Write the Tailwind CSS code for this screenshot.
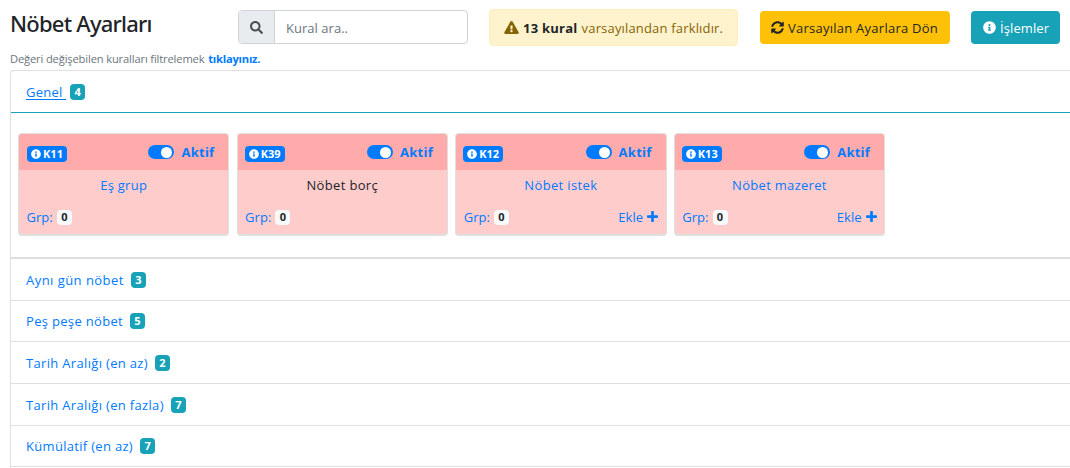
<!DOCTYPE html>
<html lang="tr">
<head>
<meta charset="utf-8">
<title>Nöbet Ayarları</title>
<script src="https://cdn.jsdelivr.net/npm/@tailwindcss/browser@4"></script>
</head>
<body class="h-[468px] overflow-hidden bg-white text-[#212529] text-[13px] leading-5 tracking-[0.25px] font-['Open_Sans','Noto_Sans',sans-serif] whitespace-nowrap">
<svg class="hidden">
  <symbol id="info" viewBox="0 0 512 512"><path fill="currentColor" d="M256 8C119 8 8 119 8 256s111 248 248 248 248-111 248-248S393 8 256 8zm0 110a42 42 0 1 1 0 84 42 42 0 0 1 0-84zm56 254a12 12 0 0 1-12 12h-88a12 12 0 0 1-12-12v-24a12 12 0 0 1 12-12h12v-64h-12a12 12 0 0 1-12-12v-24a12 12 0 0 1 12-12h64a12 12 0 0 1 12 12v100h12a12 12 0 0 1 12 12z"/></symbol>
  <symbol id="plus" viewBox="0 0 448 512"><path fill="currentColor" d="M416 200H280V64a32 32 0 0 0-32-32h-48a32 32 0 0 0-32 32v136H32a32 32 0 0 0-32 32v48a32 32 0 0 0 32 32h136v136a32 32 0 0 0 32 32h48a32 32 0 0 0 32-32V312h136a32 32 0 0 0 32-32v-48a32 32 0 0 0-32-32z"/></symbol>
</svg>

<header class="flex h-[49px] items-start pl-[10px]">
  <h1 class="mt-[8px] w-[228px] text-[22px] leading-[30px] font-medium tracking-[-0.78px] font-['Noto_Sans',sans-serif]">Nöbet Ayarları</h1>
  <div class="mt-[10px] flex h-[34px] w-[230px] overflow-hidden rounded-[4px] border border-[#ced4da]">
    <span class="flex w-[36px] items-center justify-center border-r border-[#ced4da] bg-[#e9ecef] text-[#495057]">
      <svg class="size-[13px]" viewBox="0 0 512 512"><path fill="currentColor" d="M505 442.700 405.300 343c-4.500-4.500-10.600-7-17-7H372c27.600-35.300 44-79.700 44-128C416 93.100 322.900 0 208 0S0 93.100 0 208s93.100 208 208 208c48.300 0 92.700-16.400 128-44v16.300c0 6.400 2.500 12.500 7 17l99.700 99.700c9.400 9.400 24.600 9.400 33.900 0l28.300-28.300c9.400-9.400 9.400-24.600.1-34zM208 336c-70.700 0-128-57.200-128-128 0-70.700 57.200-128 128-128 70.700 0 128 57.200 128 128 0 70.700-57.200 128-128 128z"/></svg>
    </span>
    <input class="w-0 flex-1 pt-px pl-[11px] tracking-[0.03px] placeholder:text-[#6c757d]" placeholder="Kural ara..">
  </div>
  <div class="mt-[9px] ml-[21px] flex h-[37px] w-[249px] items-center rounded-[4px] border border-[#ffeeba] bg-[#fff3cd] pl-[14px] text-[#856404]">
    <svg class="mr-[4px] h-[13px] w-[15px]" viewBox="0 0 576 512"><path fill="currentColor" d="M569.500 440c18.500 32-4.700 72-41.600 72H48c-36.900 0-60-40.100-41.600-72L246.400 24c18.500-32 64.700-32 83.200 0l239.900 416zM288 354a46 46 0 1 0 0 92 46 46 0 0 0 0-92zm-43.700-165.300 7.400 136c.4 6.400 5.600 11.300 12 11.300h48.600c6.400 0 11.600-5 12-11.300l7.400-136c.4-6.900-5.100-12.700-12-12.700h-63.400c-6.900 0-12.400 5.800-12 12.700z"/></svg>
    <b class="mr-[4px] tracking-[0.25px] text-[#212529]">13 kural</b>
    <span class="tracking-[0.17px]">varsayılandan farklıdır.</span>
  </div>
  <button class="mt-[11px] ml-[22px] flex h-[33px] w-[190px] items-center rounded-[4px] bg-[#ffc107] pl-[11px]">
    <svg class="mr-[4px] size-[13px]" viewBox="0 0 512 512"><path fill="currentColor" d="M370.700 133.300C339.500 104 298.900 88 255.800 88c-77.500.1-144.300 53.200-162.800 126.900-1.300 5.400-6.100 9.100-11.700 9.100H24.100c-7.500 0-13.200-6.800-11.800-14.200C33.900 94.900 134.800 8 256 8c66.400 0 126.800 26.100 171.300 68.700L463 41c15.100-15.100 41-4.400 41 17v134c0 13.300-10.700 24-24 24H346c-21.400 0-32.100-25.900-17-41l41.700-41.700zM32 296h134c21.400 0 32.100 25.900 17 41l-41.800 41.800c31.300 29.300 71.800 45.300 114.900 45.300 77.400-.1 144.300-53.100 162.800-126.800 1.300-5.400 6.100-9.100 11.700-9.100h57.300c7.500 0 13.200 6.800 11.800 14.200C478.100 417.100 377.200 504 256 504c-66.400 0-126.800-26.100-171.300-68.700L49 471c-15.100 15.100-41 4.400-41-17V320c0-13.300 10.700-24 24-24z"/></svg>
    Varsayılan Ayarlara Dön
  </button>
  <button class="mt-[11px] ml-[21px] flex h-[33px] w-[89px] items-center rounded-[4px] bg-[#17a2b8] pl-[12px] tracking-[0.09px] text-white">
    <svg class="mr-[4px] size-[13px]"><use href="#info"/></svg>
    İşlemler
  </button>
</header>

<p class="h-[21px] pl-[10px] text-[11.200px] tracking-[-0.160px] text-[#6c757d]">Değeri değişebilen kuralları filtrelemek <b class="ml-px tracking-[-0.220px] text-[#007bff]">tıklayınız.</b></p>

<main class="ml-[10px] h-[420px] rounded-tl-[4px] border-t border-l border-[#dfdfdf] text-[#007bff]">
  <div class="flex h-[42px] items-center border-b border-[#17a2b8] pl-[15px]">
    <span class="whitespace-pre underline underline-offset-2">Genel </span>
    <span class="ml-[4px] flex h-[16px] w-[15px] items-center justify-center rounded-[4px] bg-[#17a2b8] text-[11px] font-bold tracking-normal text-white">4</span>
  </div>

  <section class="flex h-[146px] gap-[7.200px] border-b-2 border-[#dfdfdf] pt-[20px] pl-[7px]">
    <article class="h-[103px] w-[211.400px] overflow-hidden rounded-[4px] border border-b-2 border-[#dfdfdf] bg-[#ffcccc]">
      <div class="flex h-[36px] items-center bg-[#ffabab] pl-[8px]">
        <span class="mt-[4px] flex h-[16px] w-[40px] items-center justify-center gap-[2px] rounded-[4px] bg-[#007bff] text-[11px] font-bold tracking-normal text-white"><svg class="size-[10px]"><use href="#info"/></svg>K11</span>
        <span class="ml-auto flex h-[14px] w-[26px] items-center justify-end rounded-full bg-[#007bff] pr-[2px]"><i class="size-[11px] rounded-full bg-white"></i></span>
        <b class="mr-[14px] ml-[7px]">Aktif</b>
      </div>
      <div class="h-[31px] pt-[5px] text-center">Eş grup</div>
      <div class="flex h-[32px] items-center px-[7.500px] tracking-[0.04px]">Grp:
        <span class="ml-[4px] flex h-[15px] w-[15px] items-center justify-center rounded-[4px] bg-[#f8f9fa] text-[11px] font-bold text-[#212529]">0</span>
      </div>
    </article>
    <article class="h-[103px] w-[211.400px] overflow-hidden rounded-[4px] border border-b-2 border-[#dfdfdf] bg-[#ffcccc]">
      <div class="flex h-[36px] items-center bg-[#ffabab] pl-[7px]">
        <span class="mt-[4px] flex h-[16px] w-[40px] items-center justify-center gap-[2px] rounded-[4px] bg-[#007bff] text-[11px] font-bold tracking-normal text-white"><svg class="size-[10px]"><use href="#info"/></svg>K39</span>
        <span class="ml-auto flex h-[14px] w-[26px] items-center justify-end rounded-full bg-[#007bff] pr-[2px]"><i class="size-[11px] rounded-full bg-white"></i></span>
        <b class="mr-[14px] ml-[7px]">Aktif</b>
      </div>
      <div class="h-[31px] pt-[5px] text-center tracking-[0.35px] text-[#212529]">Nöbet borç</div>
      <div class="flex h-[32px] items-center px-[7.500px] tracking-[0.04px]">Grp:
        <span class="ml-[4px] flex h-[15px] w-[15px] items-center justify-center rounded-[4px] bg-[#f8f9fa] text-[11px] font-bold text-[#212529]">0</span>
      </div>
    </article>
    <article class="h-[103px] w-[211.400px] overflow-hidden rounded-[4px] border border-b-2 border-[#dfdfdf] bg-[#ffcccc]">
      <div class="flex h-[36px] items-center bg-[#ffabab] pl-[7px]">
        <span class="mt-[4px] flex h-[16px] w-[40px] items-center justify-center gap-[2px] rounded-[4px] bg-[#007bff] text-[11px] font-bold tracking-normal text-white"><svg class="size-[10px]"><use href="#info"/></svg>K12</span>
        <span class="ml-auto flex h-[14px] w-[26px] items-center justify-end rounded-full bg-[#007bff] pr-[2px]"><i class="size-[11px] rounded-full bg-white"></i></span>
        <b class="mr-[14px] ml-[7px]">Aktif</b>
      </div>
      <div class="h-[31px] pt-[5px] text-center tracking-[0.35px]">Nöbet istek</div>
      <div class="flex h-[32px] items-center px-[7.500px] tracking-[0.04px]">Grp:
        <span class="ml-[4px] flex h-[15px] w-[15px] items-center justify-center rounded-[4px] bg-[#f8f9fa] text-[11px] font-bold text-[#212529]">0</span>
        <span class="ml-auto flex items-center gap-[4px]">Ekle <svg class="-mt-px h-[13px] w-[11px]"><use href="#plus"/></svg></span>
      </div>
    </article>
    <article class="h-[103px] w-[211.400px] overflow-hidden rounded-[4px] border border-b-2 border-[#dfdfdf] bg-[#ffcccc]">
      <div class="flex h-[36px] items-center bg-[#ffabab] pl-[7px]">
        <span class="mt-[4px] flex h-[16px] w-[40px] items-center justify-center gap-[2px] rounded-[4px] bg-[#007bff] text-[11px] font-bold tracking-normal text-white"><svg class="size-[10px]"><use href="#info"/></svg>K13</span>
        <span class="ml-auto flex h-[14px] w-[26px] items-center justify-end rounded-full bg-[#007bff] pr-[2px]"><i class="size-[11px] rounded-full bg-white"></i></span>
        <b class="mr-[14px] ml-[7px]">Aktif</b>
      </div>
      <div class="h-[31px] pt-[5px] text-center tracking-[0.300px]">Nöbet mazeret</div>
      <div class="flex h-[32px] items-center px-[7.500px] tracking-[0.04px]">Grp:
        <span class="ml-[4px] flex h-[15px] w-[15px] items-center justify-center rounded-[4px] bg-[#f8f9fa] text-[11px] font-bold text-[#212529]">0</span>
        <span class="ml-auto flex items-center gap-[4px]">Ekle <svg class="-mt-px h-[13px] w-[11px]"><use href="#plus"/></svg></span>
      </div>
    </article>
  </section>

  <div class="flex h-[42px] items-center border-b border-[#dfdfdf] pl-[15px] tracking-[0.460px]">Aynı gün nöbet<span class="ml-[7px] flex h-[16px] w-[15px] items-center justify-center rounded-[4px] bg-[#17a2b8] text-[11px] font-bold tracking-normal text-white">3</span></div>
  <div class="flex h-[41px] items-center border-b border-[#dfdfdf] pl-[15px] tracking-[0.320px]">Peş peşe nöbet<span class="ml-[7px] flex h-[16px] w-[15px] items-center justify-center rounded-[4px] bg-[#17a2b8] text-[11px] font-bold tracking-normal text-white">5</span></div>
  <div class="flex h-[42px] items-center border-b border-[#dfdfdf] pl-[15px] tracking-[0.330px]">Tarih Aralığı (en az)<span class="ml-[7px] flex h-[16px] w-[15px] items-center justify-center rounded-[4px] bg-[#17a2b8] text-[11px] font-bold tracking-normal text-white">2</span></div>
  <div class="flex h-[42px] items-center border-b border-[#dfdfdf] pl-[15px] tracking-[0.330px]">Tarih Aralığı (en fazla)<span class="ml-[7px] flex h-[16px] w-[15px] items-center justify-center rounded-[4px] bg-[#17a2b8] text-[11px] font-bold tracking-normal text-white">7</span></div>
  <div class="flex h-[41px] items-center border-b border-[#dfdfdf] pl-[15px] tracking-[0.310px]">Kümülatif (en az)<span class="ml-[7px] flex h-[16px] w-[15px] items-center justify-center rounded-[4px] bg-[#17a2b8] text-[11px] font-bold tracking-normal text-white">7</span></div>
</main>
</body>
</html>
